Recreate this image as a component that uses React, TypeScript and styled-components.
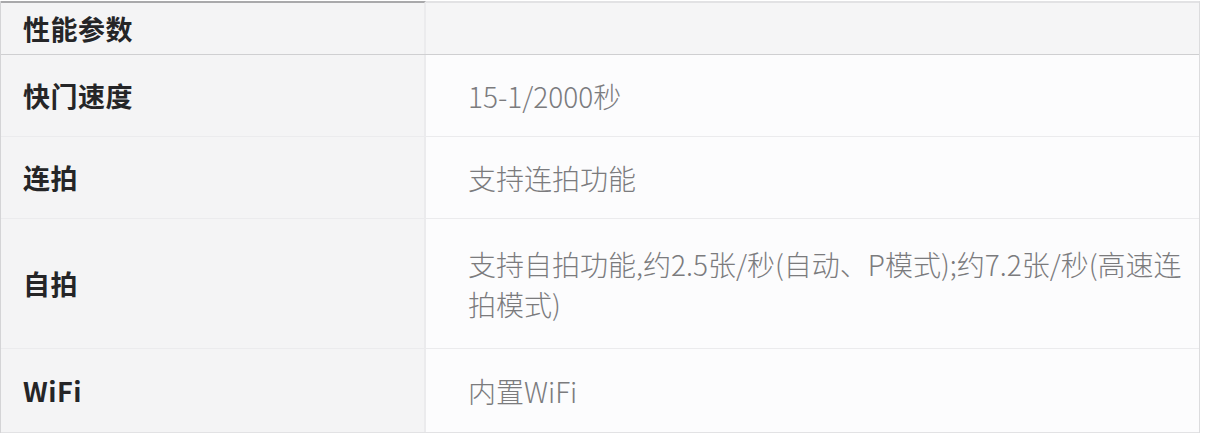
import React from "react";
import styled, { createGlobalStyle } from "styled-components";

const Global = createGlobalStyle`
  html, body { margin: 0; padding: 0; background: #ffffff; }
  body { font-family: "Noto Sans CJK SC", "Noto Sans", sans-serif; }
`;

const Table = styled.div`
  width: 1200px;
  margin-top: 1px;
  display: flex;
  flex-direction: column;
  border-left: 1px solid #d4d4d6;
  border-right: 1px solid #dcdcde;
  box-sizing: border-box;
`;

const Row = styled.div<{ $h: number; $head?: boolean; $last?: boolean }>`
  display: grid;
  grid-template-columns: 425px 1fr;
  height: ${(p) => p.$h}px;
  box-sizing: border-box;
  border-bottom: 1px solid ${(p) => (p.$head ? "#cfcfd1" : p.$last ? "#e2e2e4" : "#ebebed")};
  border-top: ${(p) => (p.$head ? "2px solid #e2e2e4" : "none")};
`;

const Label = styled.div<{ $head?: boolean }>`
  display: flex;
  align-items: center;
  padding-left: 22px;
  background: #f4f4f5;
  border-right: 2px solid #ebebed;
  font-size: 27px;
  font-weight: 700;
  color: #252527;
  letter-spacing: 0.5px;
  ${(p) => (p.$head ? "margin-top: -2px; border-top: 2px solid #a9a9ab;" : "")}
`;

const Value = styled.div<{ $head?: boolean }>`
  display: flex;
  align-items: center;
  padding-left: 42px;
  padding-right: 0;
  background: ${(p) => (p.$head ? "#f5f5f6" : "#fcfcfd")};
  font-size: 28px;
  font-weight: 300;
  line-height: 40px;
  color: #7b7b7d;
`;

const rows = [
  { k: "快门速度", v: "15-1/2000秒", h: 82 },
  { k: "连拍", v: "支持连拍功能", h: 82 },
  { k: "自拍", v: "支持自拍功能,约2.5张/秒(自动、P模式);约7.2张/秒(高速连拍模式)", h: 130 },
  { k: "WiFi", v: "内置WiFi", h: 84 },
];

export default function App() {
  return (
    <>
      <Global />
      <Table>
        <Row $h={54} $head>
          <Label $head>性能参数</Label>
          <Value $head />
        </Row>
        {rows.map((r, i) => (
          <Row key={r.k} $h={r.h} $last={i === rows.length - 1}>
            <Label>{r.k}</Label>
            <Value>{r.v}</Value>
          </Row>
        ))}
      </Table>
    </>
  );
}
